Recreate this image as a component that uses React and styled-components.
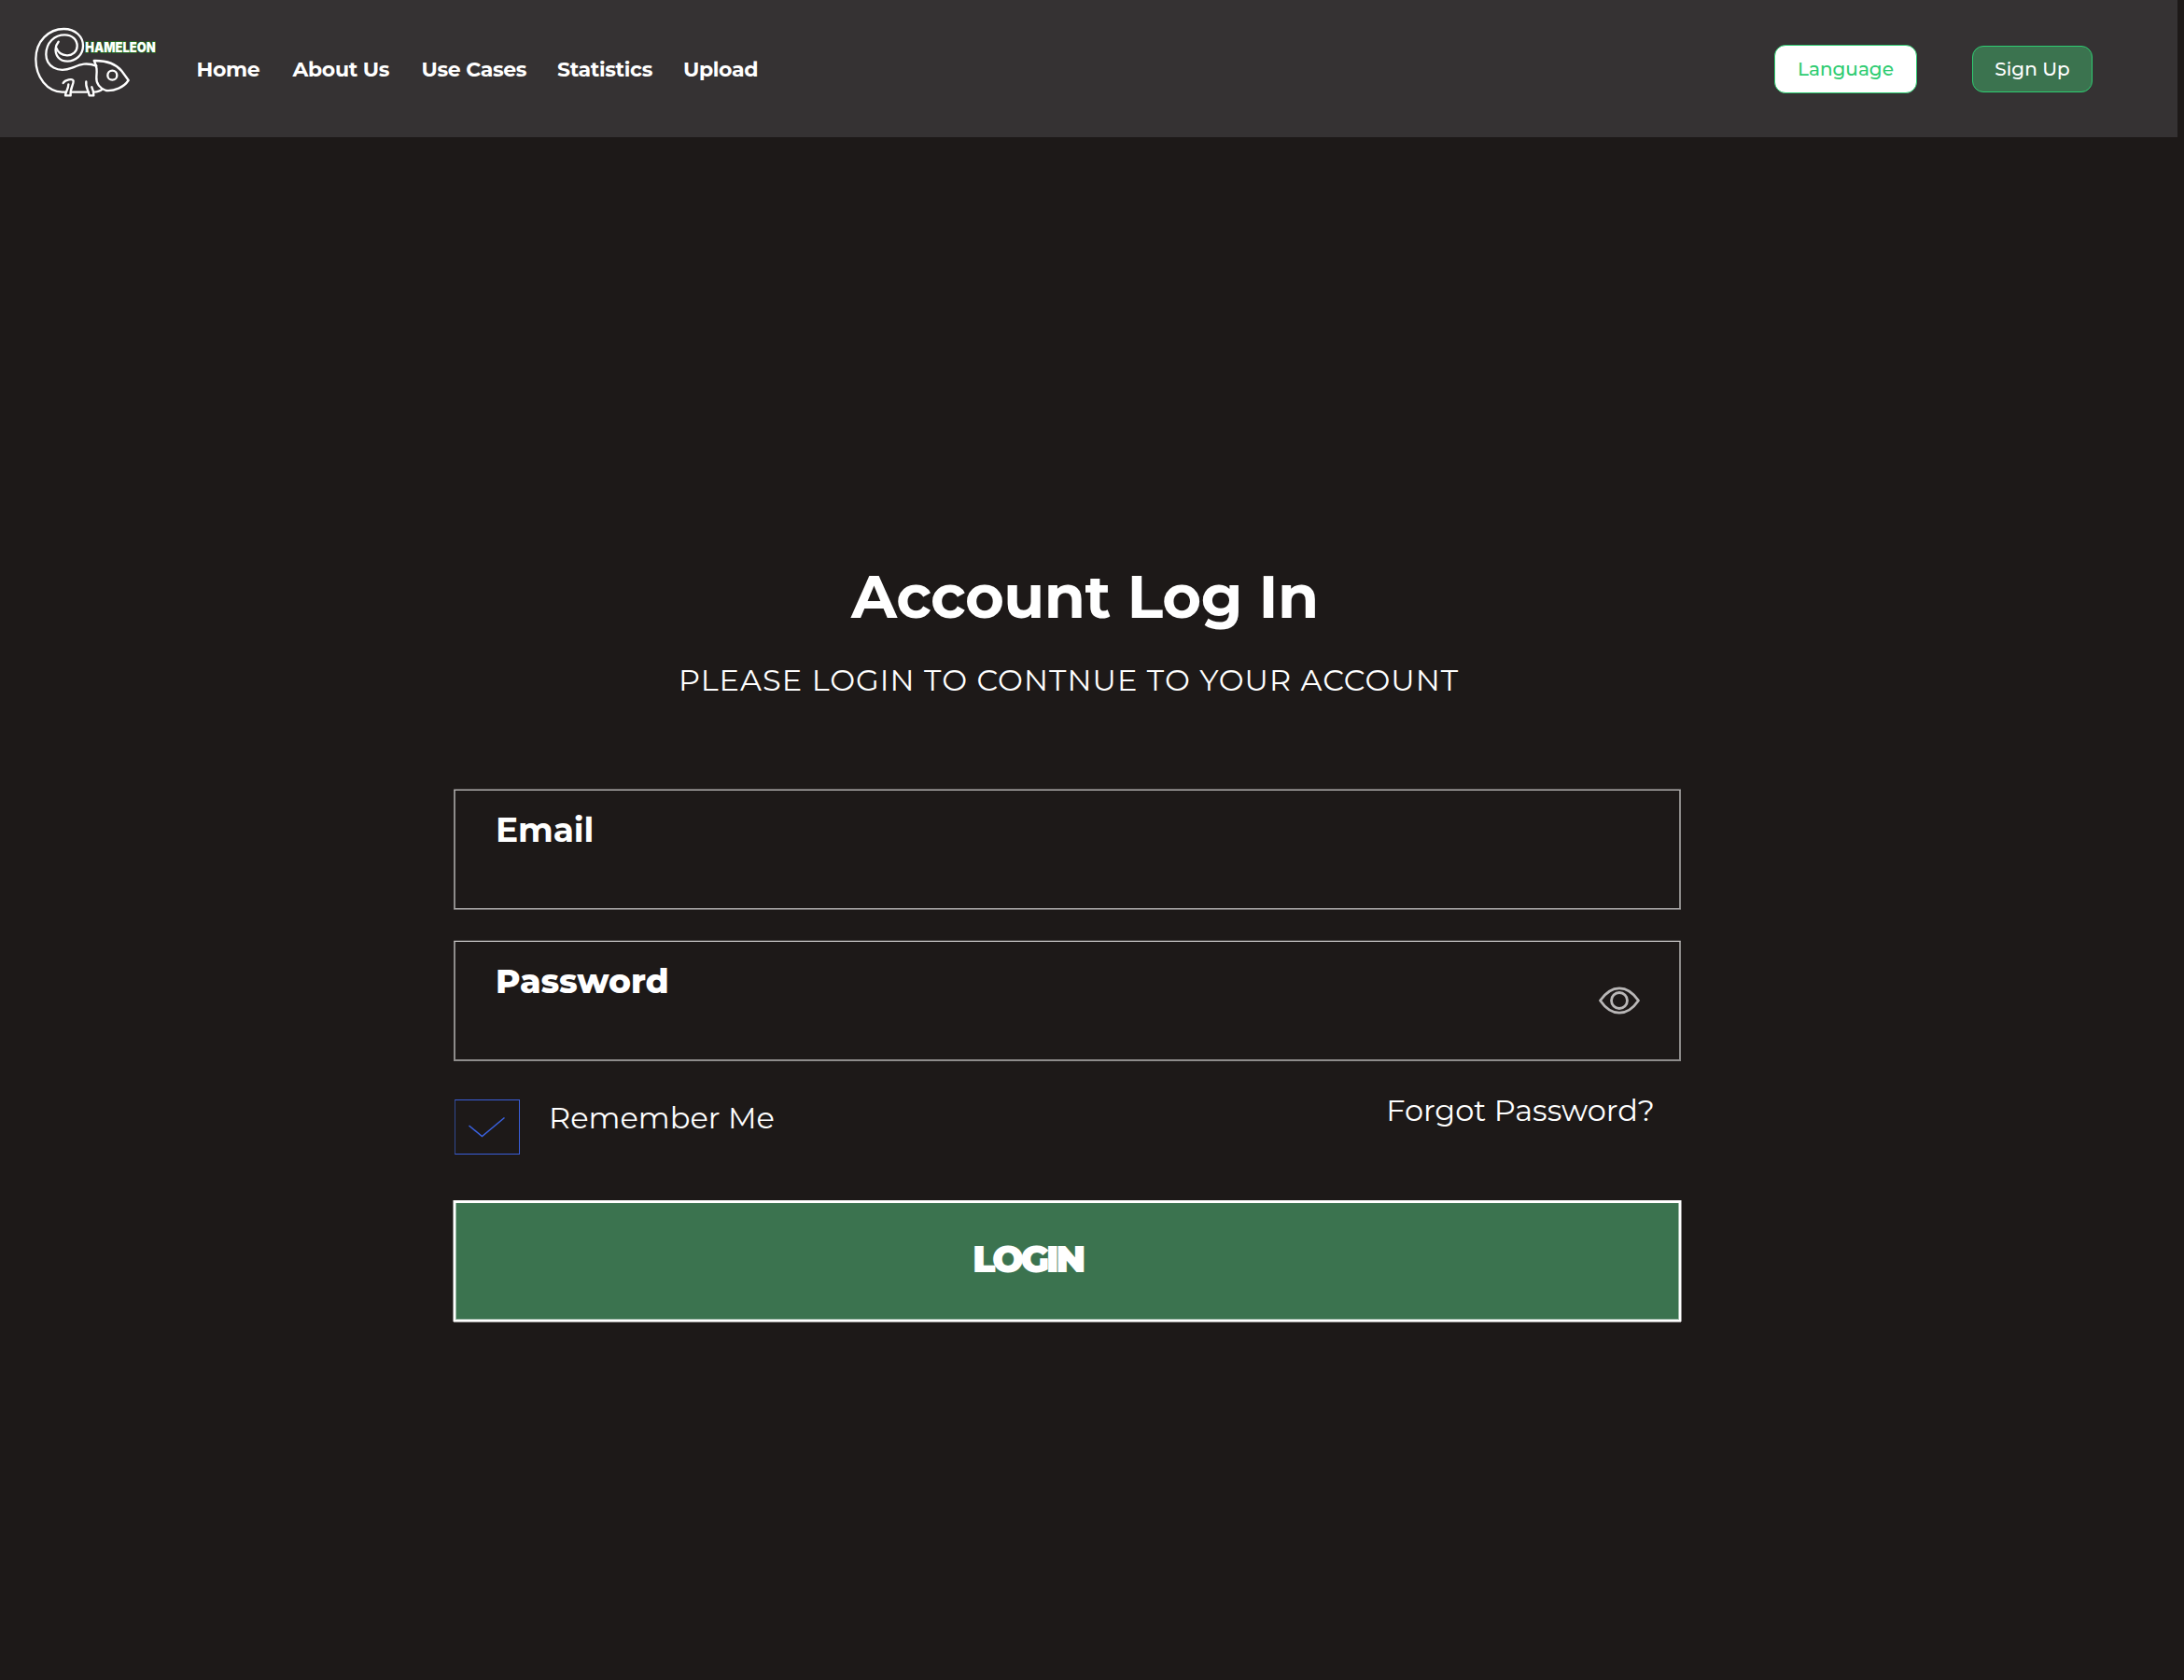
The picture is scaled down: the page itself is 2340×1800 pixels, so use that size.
import React from "react";
import styled, { createGlobalStyle } from "styled-components";

const GlobalStyle = createGlobalStyle`
  * { box-sizing: border-box; }
  body {
    margin: 0;
    background: #1d1918;
    color: #ffffff;
    font-family: Montserrat, Inter, sans-serif;
  }
`;

const Page = styled.div`
  display: flex;
  flex-direction: column;
  min-height: 1800px;
`;

const Header = styled.header`
  display: flex;
  align-items: center;
  width: 2333px;
  height: 147px;
  padding: 1px 91px 0 20px;
  background: #353233;
`;

const Logo = styled.svg`
  flex: none;
  align-self: flex-start;
  width: 170px;
  height: 110px;
  margin-top: 14px;
  overflow: visible;
`;

const Nav = styled.nav`
  display: grid;
  grid-template-columns: 103px 138px 145.5px 135px auto;
  margin-left: 20.5px;
  padding-top: 1px;
`;

const NavLink = styled.a`
  font-size: 22px;
  font-weight: 700;
  line-height: 28px;
  letter-spacing: -0.35px;
  white-space: nowrap;
`;

const Actions = styled.div`
  display: flex;
  align-items: center;
  gap: 59px;
  margin-left: auto;
`;

const PillButton = styled.button`
  width: ${(p) => (p.$filled ? 129 : 153)}px;
  height: ${(p) => (p.$filled ? 50 : 52)}px;
  padding: 0;
  border: 1px solid #2ecc71;
  border-radius: 12px;
  background: ${(p) => (p.$filled ? "#3b734f" : "#ffffff")};
  color: ${(p) => (p.$filled ? "#ffffff" : "#2ecc71")};
  font: 500 20px/26px Montserrat, Inter, sans-serif;
`;

const Main = styled.main`
  display: flex;
  flex-direction: column;
  width: 1315px;
  margin: 457px 0 0 486px;
`;

const Title = styled.h1`
  margin: 0;
  padding-left: 426px;
  font-size: 64px;
  font-weight: 700;
  line-height: 70px;
  letter-spacing: -0.52px;
`;

const Subtitle = styled.p`
  margin: 35px 0 97px;
  padding-left: 241px;
  font-size: 32px;
  font-weight: 400;
  line-height: 40px;
  letter-spacing: 1.05px;
`;

const Form = styled.form`
  display: flex;
  flex-direction: column;
`;

const Field = styled.label`
  display: flex;
  align-items: center;
  justify-content: space-between;
  height: 128px;
  margin-bottom: 34px;
  padding: 0 41px 0 43px;
  border: solid #8e8c8b;
  border-width: 1px 2px;
  border-top-color: ${(p) => p.$top};
  border-bottom-color: ${(p) => p.$bottom};
  box-shadow: 0 -1px 0 ${(p) => p.$topFringe}, 0 1px 0 ${(p) => p.$bottomFringe};
`;

const FieldLabel = styled.span`
  align-self: flex-start;
  margin-top: 22px;
  font-size: 36px;
  font-weight: ${(p) => p.$weight};
  line-height: 40px;
  letter-spacing: -0.1px;
`;

const EyeIcon = styled.svg`
  width: 46px;
  height: 32px;
  fill: none;
  stroke: #b9b7b7;
  stroke-width: 2.8;
  stroke-linejoin: round;
`;

const Options = styled.div`
  display: flex;
  align-items: flex-start;
  justify-content: space-between;
  padding: 0 28px 0 1px;
  font-size: 32px;
  font-weight: 400;
  line-height: 40px;
`;

const Remember = styled.label`
  display: flex;
  align-items: flex-start;
  gap: 31px;
  margin-top: 8px;
`;

const CheckBox = styled.span`
  display: block;
  width: 70px;
  height: 59px;
  border: 1px solid #3a5fd9;
  border-left-color: #31488f;
`;

const CheckMark = styled.svg`
  display: block;
  width: 68px;
  height: 57px;
  fill: none;
  stroke: #3a62e0;
  stroke-width: 1.5;
`;

const LoginButton = styled.button`
  display: flex;
  align-items: flex-start;
  height: 130px;
  margin-top: 49px;
  padding: 40px 0 0 554px;
  border: solid #ffffff;
  border-width: 3px 2px 2px;
  background: #3b734f;
  box-shadow: -1px 0 0 #8e8c8b, 1px 0 0 #8e8c8b, 0 1px 0 #8e8c8b,
    inset 1px 0 0 #9bb8a6, inset -1px -1px 0 #9bb8a6;
  color: #ffffff;
  font: 900 40px/40px Montserrat, Inter, sans-serif;
  letter-spacing: -3.4px;
`;

const links = ["Home", "About Us", "Use Cases", "Statistics", "Upload"];

function ChameleonLogo() {
  return (
    <Logo viewBox="0 0 510 330" fill="none">
      <g stroke="#ffffff" strokeWidth="7" strokeLinecap="round" strokeLinejoin="round">
        <path d="M150 251H140C92 249 55 205 55 145C55 87 97 48 145 48C184 48 207 74 207 102C207 133 182 152 157 152C131 152 116 132 119 110C120 101 124 94 128 89" />
        <path d="M250 167C215 154 197 163 172 173C125 191 88 168 88 130C88 91 116 67 148 67C173 67 188 84 188 103C188 121 173 134 155 133C139 132 126 123 121 109" />
        <path d="M242 150C281 149 313 161 331 183L353 213C338 236 308 248 281 246C262 240 248 223 250 203C252 181 252 168 242 150Z" />
        <circle cx="301" cy="197" r="15" />
        <path d="M143 222C149 211 174 206 176 215C177 227 164 240 167 262H150C151 249 160 241 160 226" />
        <path d="M168 251H225M217 217C214 235 224 245 227 262H241C242 252 239 244 235 235M241 251C254 250 263 247 269 241" />
      </g>
      <text
        x="214"
        y="124"
        textLength="226"
        lengthAdjust="spacingAndGlyphs"
        fontFamily="Inter, sans-serif"
        fontSize="45"
        fontWeight="900"
        fill="#ffffff"
        stroke="#1f7a1d"
        strokeWidth="4"
        paintOrder="stroke"
      >
        HAMELEON
      </text>
    </Logo>
  );
}

export default function App() {
  return (
    <Page>
      <GlobalStyle />
      <Header>
        <ChameleonLogo />
        <Nav>
          {links.map((link) => (
            <NavLink key={link}>{link}</NavLink>
          ))}
        </Nav>
        <Actions>
          <PillButton>Language</PillButton>
          <PillButton $filled>Sign Up</PillButton>
        </Actions>
      </Header>
      <Main>
        <Title>Account Log In</Title>
        <Subtitle>PLEASE LOGIN TO CONTNUE TO YOUR ACCOUNT</Subtitle>
        <Form>
          <Field $top="#c8c6c6" $topFringe="#4c4948" $bottom="#b0aeae" $bottomFringe="#6b6867">
            <FieldLabel $weight={700}>Email</FieldLabel>
          </Field>
          <Field $top="#e6e5e5" $topFringe="#302c2b" $bottom="#8e8c8b" $bottomFringe="#8e8c8b">
            <FieldLabel $weight={800}>Password</FieldLabel>
            <EyeIcon viewBox="0 0 46 32">
              <path d="M2.500 16C8 8 15 2.800 23 2.800S38 8 43.500 16C38 24 31 29.200 23 29.200S8 24 2.500 16Z" />
              <circle cx="23" cy="16" r="8.500" />
            </EyeIcon>
          </Field>
          <Options>
            <Remember>
              <CheckBox>
                <CheckMark viewBox="0 0 68 57">
                  <path d="M14.500 27L28.500 38.500L52.500 18.500" />
                </CheckMark>
              </CheckBox>
              <span>Remember Me</span>
            </Remember>
            <span>Forgot Password?</span>
          </Options>
          <LoginButton type="button">LOGIN</LoginButton>
        </Form>
      </Main>
    </Page>
  );
}
